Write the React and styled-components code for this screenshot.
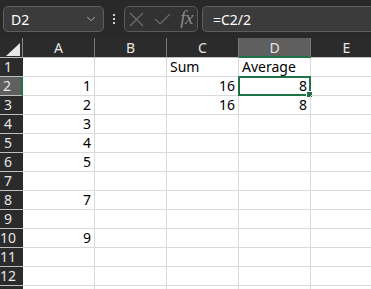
import React from "react";
import styled, { createGlobalStyle } from "styled-components";
import { ChevronDown } from "lucide-react";

const GlobalStyle = createGlobalStyle`
  html, body {
    margin: 0;
    padding: 0;
    background: #ffffff;
    font-family: "Noto Sans", "Liberation Sans", sans-serif;
  }
`;

const columns = ["A", "B", "C", "D", "E"];

const data = {
  1: { C: { v: "Sum", left: true }, D: { v: "Average", left: true } },
  2: { A: { v: "1" }, C: { v: "16" }, D: { v: "8" } },
  3: { A: { v: "2" }, C: { v: "16" }, D: { v: "8" } },
  4: { A: { v: "3" } },
  5: { A: { v: "4" } },
  6: { A: { v: "5" } },
  8: { A: { v: "7" } },
  10: { A: { v: "9" } },
};

// row 13 only peeks in at the bottom edge, so no label
const rows = [1, 2, 3, 4, 5, 6, 7, 8, 9, 10, 11, 12, 13];

const App = () => {
  return (
    <Page>
      <GlobalStyle />
      <FormulaBar>
        <NameBox>
          <span>D2</span>
          <ChevronDown size={14} strokeWidth={1.5} color="#bdbdbd" />
        </NameBox>
        <Dots>
          <i />
          <i />
          <i />
        </Dots>
        <ButtonGroup>
          <svg width="15" height="15" viewBox="0 0 15 15">
            <path d="M1 1 L14 14 M14 1 L1 14" stroke="#6c6c6c" strokeWidth="1.2" fill="none" />
          </svg>
          <svg width="17" height="12" viewBox="0 0 17 12">
            <path d="M1 6 L6 11 L16 1" stroke="#6c6c6c" strokeWidth="1.2" fill="none" />
          </svg>
          <Fx>fx</Fx>
        </ButtonGroup>
        <FormulaInput>=C2/2</FormulaInput>
      </FormulaBar>
      <Sheet>
        <Corner>
          <svg width="14" height="13" viewBox="0 0 14 13">
            <polygon points="14,0 14,13 0,13" fill="#e8e8e8" />
          </svg>
        </Corner>
        {columns.map((c) => (
          <ColHeader key={c} $active={c === "D"}>
            {c}
          </ColHeader>
        ))}
        {rows.map((r) => (
          <React.Fragment key={r}>
            <RowHeader $active={r === 2}>{r < 13 ? r : ""}</RowHeader>
            {columns.map((c) => {
              const cell = data[r] && data[r][c];
              return (
                <Cell key={c} $left={cell && cell.left}>
                  {cell ? cell.v : ""}
                  {r === 2 && c === "D" && (
                    <Selection>
                      <Handle />
                    </Selection>
                  )}
                </Cell>
              );
            })}
          </React.Fragment>
        ))}
      </Sheet>
    </Page>
  );
};

const Page = styled.div`
  width: 371px;
  height: 289px;
  overflow: hidden;
  background: #ffffff;
`;

const FormulaBar = styled.div`
  height: 38px;
  background: #292929;
  display: flex;
  align-items: center;
  padding: 0 0 0 3px;
  box-sizing: border-box;
`;

const NameBox = styled.div`
  width: 101px;
  height: 26px;
  box-sizing: border-box;
  background: #3b3b3b;
  border: 1px solid #5e5e5e;
  border-radius: 5px;
  display: flex;
  align-items: center;
  justify-content: space-between;
  padding: 0 5px 0 7px;
  color: #ffffff;
  font-size: 14px;
`;

const Dots = styled.div`
  width: 20px;
  display: flex;
  flex-direction: column;
  align-items: center;
  gap: 2px;
  i {
    display: block;
    width: 2px;
    height: 2px;
    background: #d0d0d0;
  }
`;

const ButtonGroup = styled.div`
  width: 74px;
  height: 26px;
  box-sizing: border-box;
  border: 1px solid #5a5a5a;
  border-radius: 5px;
  background: #323232;
  display: flex;
  align-items: center;
  justify-content: space-between;
  padding: 0 4px 0 4px;
`;

const Fx = styled.span`
  font-family: "Liberation Serif", "DejaVu Serif", serif;
  font-style: italic;
  font-size: 19px;
  color: #8a8a8a;
  letter-spacing: -0.5px;
  margin-top: -3px;
`;

const FormulaInput = styled.div`
  flex: 1;
  margin-left: 4px;
  height: 26px;
  box-sizing: border-box;
  border: 1px solid #5e5e5e;
  border-right: none;
  border-radius: 5px 0 0 5px;
  background: #3b3b3b;
  color: #ffffff;
  font-size: 14px;
  display: flex;
  align-items: center;
  padding-left: 10px;
`;

const Sheet = styled.div`
  display: grid;
  grid-template-columns: 23px repeat(5, 72px);
  grid-template-rows: 20px;
  grid-auto-rows: 19px;
  font-size: 14px;
`;

const Corner = styled.div`
  background: #2b2b2b;
  border-bottom: 1px solid #bfbfbf;
  box-sizing: border-box;
  display: flex;
  align-items: flex-end;
  justify-content: flex-end;
  padding: 0 2px 1px 0;
  border-right: 1px solid #8a8a8a;
`;

const ColHeader = styled.div`
  background: ${(p) => (p.$active ? "#5f5f5f" : "#2b2b2b")};
  color: #e6e6e6;
  box-sizing: border-box;
  border-right: 1px solid #7a7a7a;
  border-bottom: ${(p) => (p.$active ? "2px solid #1f7346" : "1px solid #bfbfbf")};
  display: flex;
  align-items: center;
  justify-content: center;
  padding-top: ${(p) => (p.$active ? "1px" : "0")};
  line-height: 1;
`;

const RowHeader = styled.div`
  background: ${(p) => (p.$active ? "#5f5f5f" : "#2b2b2b")};
  color: #e6e6e6;
  box-sizing: border-box;
  border-bottom: 1px solid #bfbfbf;
  border-right: ${(p) => (p.$active ? "2px solid #1f7346" : "none")};
  display: flex;
  align-items: center;
  justify-content: center;
  padding-right: 7px;
  line-height: 1;
  white-space: nowrap;
`;

const Cell = styled.div`
  position: relative;
  box-sizing: border-box;
  border-right: 1px solid #dadada;
  border-bottom: 1px solid #dadada;
  color: #000000;
  display: flex;
  align-items: center;
  justify-content: ${(p) => (p.$left ? "flex-start" : "flex-end")};
  padding: 0 3px 0 3px;
  line-height: 1;
  white-space: nowrap;
`;

const Selection = styled.div`
  position: absolute;
  left: -1px;
  top: -1px;
  right: -1px;
  bottom: -1px;
  border: 2px solid #1f7346;
  pointer-events: none;
`;

const Handle = styled.div`
  position: absolute;
  right: -4px;
  bottom: -4px;
  width: 5px;
  height: 5px;
  background: #1f7346;
  border: 1px solid #ffffff;
`;

export default App;
